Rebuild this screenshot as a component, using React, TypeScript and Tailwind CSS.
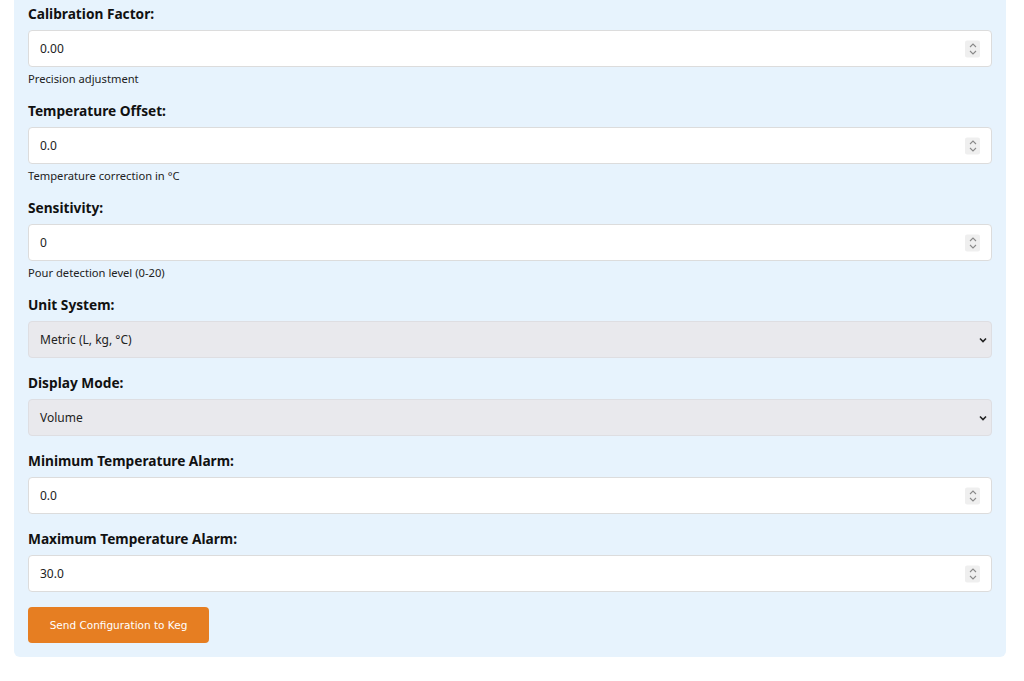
import React from 'react'

const font = { fontFamily: '"Noto Sans", "Open Sans", sans-serif' }

const Spinner = () => (
  <div className="absolute right-[11px] top-1/2 -translate-y-1/2 w-[15px] h-[17px] bg-[#efefef] rounded-[2px] flex flex-col items-center justify-center">
    <svg width="8" height="13" viewBox="0 0 8 13" fill="none" stroke="#8a8a8a" strokeWidth="1.1">
      <path d="M1 4.5 L4 1.5 L7 4.5" />
      <path d="M1 8.5 L4 11.5 L7 8.5" />
    </svg>
  </div>
)

const NumberField = ({ label, value, help }: any) => (
  <div className="mb-[15px]">
    <div className="text-[13.7px] font-bold leading-[20px] text-[#111] mb-[6px]">{label}</div>
    <div className="relative h-[37px] bg-white border border-[#dcdcdc] rounded-[4px] flex items-center pl-[11px] pt-[1px] text-[12px] text-[#222]">
      {value}
      <Spinner />
    </div>
    {help && <div className="mt-[4px] text-[11.2px] leading-[15px] text-[#222]">{help}</div>}
  </div>
)

const SelectField = ({ label, value }: any) => (
  <div className="mb-[15px]">
    <div className="text-[13.7px] font-bold leading-[20px] text-[#111] mb-[6px]">{label}</div>
    <div className="relative h-[37px] bg-[#e9e9ed] border border-[#dedee2] rounded-[4px] flex items-center pl-[11px] pt-[1px] text-[12px] text-[#222]">
      {value}
      <svg className="absolute right-[4px] top-1/2 -translate-y-1/2" width="8" height="6" viewBox="0 0 8 6" fill="none" stroke="#222" strokeWidth="1.6">
        <path d="M1 1.5 L4 4.5 L7 1.5" />
      </svg>
    </div>
  </div>
)

export default function App() {
  return (
    <div className="min-h-[681px] bg-white pl-[14px] pr-[18px]" style={font}>
      <div className="bg-[#e7f3fd] rounded-b-[6px] px-[14px] pt-[4px] pb-[14px]">
        <NumberField label="Calibration Factor:" value="0.00" help="Precision adjustment" />
        <NumberField label="Temperature Offset:" value="0.0" help="Temperature correction in °C" />
        <NumberField label="Sensitivity:" value="0" help="Pour detection level (0-20)" />
        <SelectField label="Unit System:" value="Metric (L, kg, °C)" />
        <SelectField label="Display Mode:" value="Volume" />
        <NumberField label="Minimum Temperature Alarm:" value="0.0" />
        <NumberField label="Maximum Temperature Alarm:" value="30.0" />
        <button
          className="h-[36px] w-[181px] bg-[#e67e22] text-white rounded-[4px] pt-[1px]"
          style={{ fontFamily: '"DejaVu Sans", Verdana, sans-serif', fontSize: '10.5px' }}
        >
          Send Configuration to Keg
        </button>
      </div>
    </div>
  )
}
